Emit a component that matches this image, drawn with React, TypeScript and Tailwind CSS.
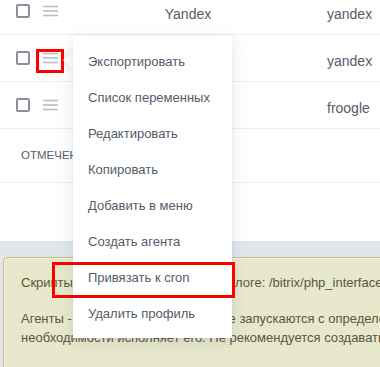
import React from "react";

const font = { fontFamily: '"Liberation Sans", Arial, sans-serif' };

function Checkbox() {
  return <div className="w-[14px] h-[14px] border-2 border-[#8d8d9b] rounded-[2px] bg-white shrink-0" />;
}

function Burger() {
  return (
    <svg width="15" height="12" viewBox="0 0 15 12" className="shrink-0">
      <line x1="0" y1="1.5" x2="15" y2="1.5" stroke="#b9bdc5" strokeWidth="1.6" />
      <line x1="0" y1="6" x2="15" y2="6" stroke="#b9bdc5" strokeWidth="1.6" />
      <line x1="0" y1="10.5" x2="15" y2="10.5" stroke="#b9bdc5" strokeWidth="1.6" />
    </svg>
  );
}

function Row({ name, code, first }: { name: string; code: string; first?: boolean }) {
  return (
    <div
      className={`flex items-center h-[47px] border-b border-[#eaeef1] text-[14px] text-[#535c69] ${first ? "mt-[-12px]" : ""}`}
    >
      <div className="pl-[16px] flex items-center">
        <Checkbox />
      </div>
      <div className="ml-[13px] flex items-center">
        <Burger />
      </div>
      <div className="w-[260px] text-center pt-[6px]">{name}</div>
      <div className="pl-[9px] pt-[6px] whitespace-nowrap">{code}</div>
    </div>
  );
}

const items = [
  "Экспортировать",
  "Список переменных",
  "Редактировать",
  "Копировать",
  "Добавить в меню",
  "Создать агента",
  "Привязать к cron",
  "Удалить профиль",
];

export default function App() {
  return (
    <div className="relative w-[380px] h-[367px] overflow-hidden bg-[#e0e7eb]" style={font}>
      <div className="bg-white h-[241px] overflow-hidden">
        <Row name="Yandex" code="yandex" first />
        <Row name="Yandex" code="yandex" />
        <Row name="Froogle" code="froogle" />
        <div className="h-[54px] border-b border-[#eaeef1] flex items-center pl-[21px] text-[11.5px] text-[#535c69] uppercase whitespace-nowrap">
          Отмеченные: 0
        </div>
      </div>

      <div className="mt-[16px] ml-[3px] h-[200px] bg-[#e7e8cc] border-t border-l border-[#c9ba8b] rounded-tl-[5px] shadow-[inset_0_1px_0_#f7f5df,inset_1px_0_0_#f7f5df] pl-[17px] pt-[15px] text-[13px] leading-[19px] text-[#59583d] whitespace-nowrap">
        <div>Скрипты экспорта находятся в каталоге: /bitrix/php_interface/include/catalog_export/</div>
        <div className="mt-[17px]">Агенты - это функции PHP, которые запускаются с определенной периодичностью.</div>
        <div>необходимости исполняет его. Не рекомендуется создавать агентов</div>
      </div>

      {/* red highlight around burger */}
      <div className="absolute left-[36px] top-[49px] w-[28px] h-[24px] border-[3px] border-[#ff0000]" />

      {/* popup menu */}
      <div className="absolute left-[66px] top-[53px] w-[14px] h-[14px] rotate-45 bg-white shadow-[0_0_6px_rgba(83,92,105,0.18)]" />
      <div className="absolute left-[73px] top-[36px] w-[159px] bg-white pt-[8px] pb-[6px] shadow-[0_4px_16px_rgba(83,92,105,0.14),0_0_4px_rgba(83,92,105,0.06)]">
        {items.map((t) => (
          <div key={t} className="h-[36px] flex items-center pl-[15px] text-[13px] text-[#535c69] whitespace-nowrap">
            {t}
          </div>
        ))}
      </div>

      {/* red highlight around cron item */}
      <div className="absolute left-[52px] top-[262px] w-[183px] h-[36px] border-[3px] border-[#ff0000]" />
    </div>
  );
}
